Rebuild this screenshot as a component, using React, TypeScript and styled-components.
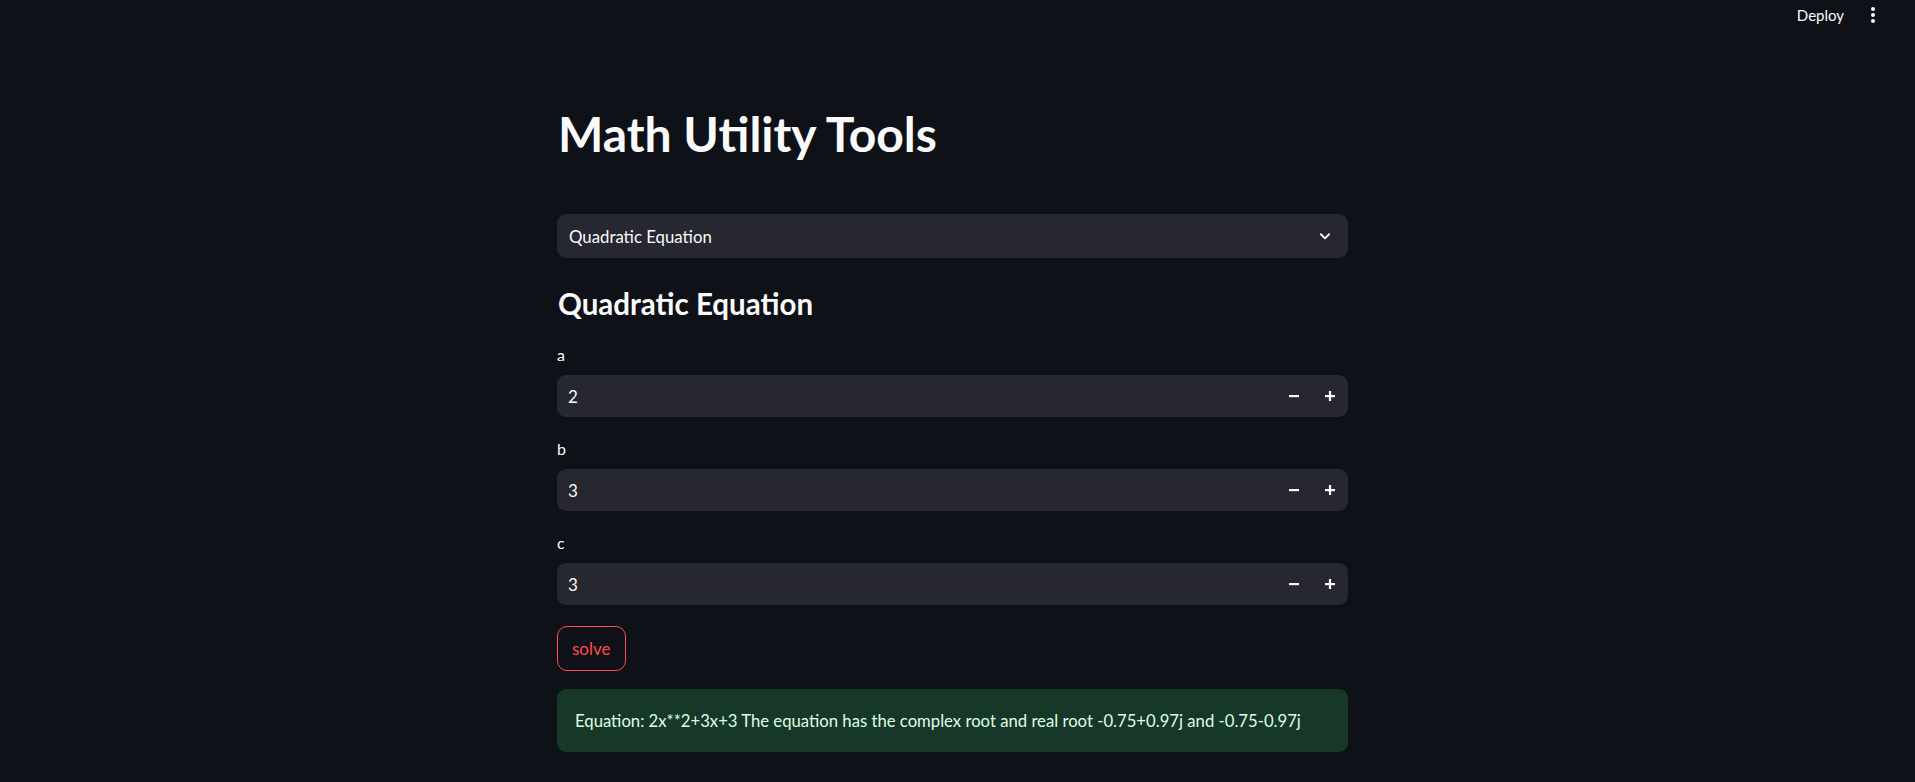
import styled, { createGlobalStyle } from "styled-components";

const GlobalStyle = createGlobalStyle`
  html, body {
    margin: 0;
    padding: 0;
    background: #0e1117;
    color: #fafafa;
    font-family: Lato, "Noto Sans", sans-serif;
  }
  * {
    box-sizing: border-box;
  }
`;

const Page = styled.div`
  width: 100%;
  height: 782px;
  overflow: hidden;
  background: #0e1117;
`;

const Header = styled.header`
  height: 30px;
  display: flex;
  justify-content: flex-end;
  align-items: center;
  padding-right: 38px;
  gap: 25px;
`;

const DeployButton = styled.button`
  background: none;
  border: none;
  padding: 0;
  color: #fafafa;
  font-family: inherit;
  font-size: 15px;
  cursor: pointer;
`;

const MenuDots = styled.div`
  display: flex;
  flex-direction: column;
  gap: 2px;
  padding: 0 2px;

  span {
    width: 4px;
    height: 4px;
    border-radius: 50%;
    background: #fafafa;
  }
`;

const Main = styled.main`
  display: flex;
  justify-content: center;
  padding-right: 10px;
`;

const Column = styled.div`
  width: 791px;
  display: flex;
  flex-direction: column;
`;

const Title = styled.h1`
  margin: 72px 0 0;
  font-size: 48px;
  line-height: 64px;
  font-weight: 700;
  padding-left: 1px;
`;

const Select = styled.div`
  margin-top: 48px;
  height: 44px;
  border-radius: 9px;
  background: #262730;
  display: flex;
  align-items: center;
  justify-content: space-between;
  padding: 0 16px 0 12px;
  font-size: 16.8px;
`;

const SubTitle = styled.h2`
  margin: 28px 0 0;
  font-size: 29.5px;
  line-height: 36px;
  font-weight: 700;
  padding-left: 1px;
`;

const Fields = styled.div`
  margin-top: 23px;
  display: flex;
  flex-direction: column;
  gap: 22px;
`;

const Field = styled.div`
  display: flex;
  flex-direction: column;
  gap: 10px;
`;

const Label = styled.label`
  font-size: 16px;
  line-height: 20px;
`;

const NumberBox = styled.div`
  height: 42px;
  border-radius: 9px;
  background: #262730;
  display: flex;
  align-items: center;
  padding-left: 11px;
`;

const NumberValue = styled.span`
  flex: 1;
  font-size: 17px;
`;

const Steps = styled.div`
  display: flex;
`;

const StepButton = styled.button`
  width: 36px;
  height: 42px;
  background: none;
  border: none;
  padding: 0;
  display: flex;
  align-items: center;
  justify-content: center;
  color: #fafafa;
  cursor: pointer;
`;

const SolveButton = styled.button`
  margin-top: 21px;
  align-self: flex-start;
  height: 45px;
  padding: 0 14px;
  border-radius: 10px;
  border: 1px solid #ff4b4b;
  background: #0e1117;
  color: #ff4b4b;
  font-family: inherit;
  font-size: 17px;
  cursor: pointer;
`;

const Result = styled.div`
  margin-top: 18px;
  height: 63px;
  border-radius: 9px;
  background: #173828;
  color: #dffde9;
  display: flex;
  align-items: center;
  padding-left: 18px;
  font-size: 16.7px;
  white-space: nowrap;
`;

const Chevron = () => (
  <svg width="14" height="14" viewBox="0 0 24 24" fill="none">
    <path
      d="M5 9l7 7 7-7"
      stroke="#fafafa"
      strokeWidth="3.2"
      strokeLinecap="round"
      strokeLinejoin="round"
    />
  </svg>
);

const Minus = () => (
  <svg width="10" height="10" viewBox="0 0 10 10">
    <rect x="0" y="4" width="10" height="2.2" fill="#fafafa" />
  </svg>
);

const Plus = () => (
  <svg width="10" height="10" viewBox="0 0 10 10">
    <rect x="0" y="4" width="10" height="2.2" fill="#fafafa" />
    <rect x="3.9" y="0" width="2.2" height="10" fill="#fafafa" />
  </svg>
);

const inputs = [
  { name: "a", value: 2 },
  { name: "b", value: 3 },
  { name: "c", value: 3 },
];

export default function App() {
  return (
    <Page>
      <GlobalStyle />
      <Header>
        <DeployButton>Deploy</DeployButton>
        <MenuDots>
          <span />
          <span />
          <span />
        </MenuDots>
      </Header>
      <Main>
        <Column>
          <Title>Math Utility Tools</Title>
          <Select>
            <span>Quadratic Equation</span>
            <Chevron />
          </Select>
          <SubTitle>Quadratic Equation</SubTitle>
          <Fields>
            {inputs.map((f) => (
              <Field key={f.name}>
                <Label>{f.name}</Label>
                <NumberBox>
                  <NumberValue>{f.value}</NumberValue>
                  <Steps>
                    <StepButton>
                      <Minus />
                    </StepButton>
                    <StepButton>
                      <Plus />
                    </StepButton>
                  </Steps>
                </NumberBox>
              </Field>
            ))}
          </Fields>
          <SolveButton>solve</SolveButton>
          <Result>
            Equation: 2x**2+3x+3 The equation has the complex root and real
            root -0.75+0.97j and -0.75-0.97j
          </Result>
        </Column>
      </Main>
    </Page>
  );
}
